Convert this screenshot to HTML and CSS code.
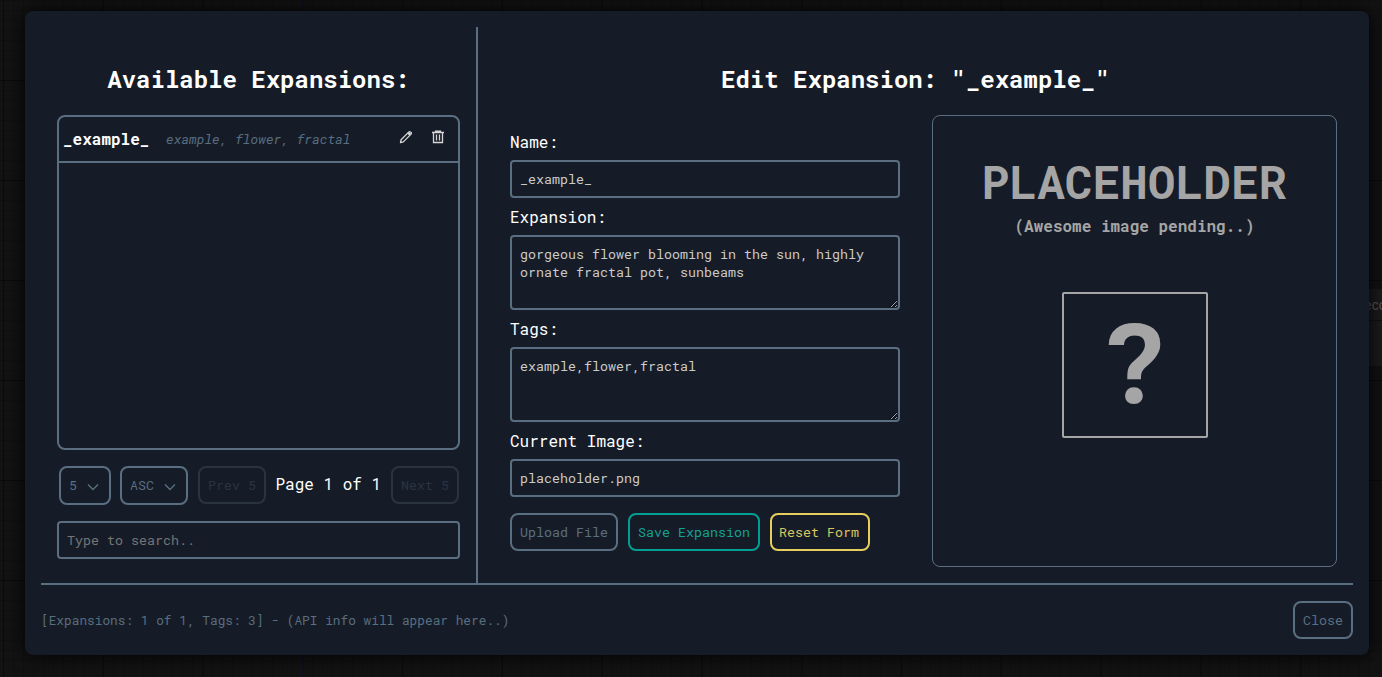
FILE: index.html
```html
<!DOCTYPE html>
<html lang="en">
<head>
<meta charset="utf-8">
<title>Expansions</title>
<link rel="stylesheet" href="styles.css">
</head>
<body>
<div class="canvas">
  <div class="link-v"></div>
  <div class="link-h"></div>
  <div class="node"><div class="node-title">eco</div></div>
</div>
<div class="modal">
  <div class="columns">
    <section class="browse">
      <h2>Available Expansions:</h2>
      <div class="list">
        <div class="item">
          <strong class="item-name">_example_</strong>
          <em class="item-tags">example, flower, fractal</em>
          <svg class="icon edit" viewBox="0 0 16 16" fill="none" stroke="#d6d6d6" stroke-width="1.3" stroke-linejoin="round"><path d="M2.500 13.500 3.100 10.700 10.900 2.900a1 1 0 0 1 1.500 0l.7.7a1 1 0 0 1 0 1.500L5.300 12.900Z"/><path d="m10.300 3.900 1.800 1.800" stroke-width="2.600"/></svg>
          <svg class="icon trash" viewBox="0 0 16 16" fill="none" stroke="#d6d6d6" stroke-width="1.3"><path d="M2 3.500h12M5.500 3V2.200h5V3M3.500 3.500v10h9v-10M6.500 5.500v6M9.500 5.500v6"/></svg>
        </div>
      </div>
      <div class="pager">
        <button class="btn select">5<svg class="chevron" viewBox="0 0 12 8"><path d="m1 1.500 5 5 5-5"/></svg></button>
        <button class="btn select order">ASC<svg class="chevron" viewBox="0 0 12 8"><path d="m1 1.500 5 5 5-5"/></svg></button>
        <button class="btn prev" disabled>Prev 5</button>
        <span class="page">Page 1 of 1</span>
        <button class="btn next" disabled>Next 5</button>
      </div>
      <input class="field search" placeholder="Type to search..">
    </section>
    <section class="editor">
      <h2>Edit Expansion: "_example_"</h2>
      <div class="editor-body">
        <form class="form">
          <label for="name">Name:</label>
          <input class="field" id="name" value="_example_">
          <label for="text">Expansion:</label>
          <textarea class="field area" id="text" spellcheck="false">gorgeous flower blooming in the sun, highly ornate fractal pot, sunbeams</textarea>
          <label for="tags">Tags:</label>
          <textarea class="field area" id="tags" spellcheck="false">example,flower,fractal</textarea>
          <label for="image">Current Image:</label>
          <input class="field" id="image" value="placeholder.png">
          <div class="actions">
            <button type="button" class="btn upload">Upload File</button>
            <button type="button" class="btn save">Save Expansion</button>
            <button type="button" class="btn reset">Reset Form</button>
          </div>
        </form>
        <div class="preview">
          <div class="preview-title">PLACEHOLDER</div>
          <div class="preview-note">(Awesome image pending..)</div>
          <div class="preview-box"><span class="mark">?</span></div>
        </div>
      </div>
    </section>
  </div>
  <footer class="footer">
    <span class="status">[Expansions: 1 of 1, Tags: 3] - (API info will appear here..)</span>
    <button class="btn">Close</button>
  </footer>
</div>
</body>
</html>
```
FILE: styles.css
```css
* { box-sizing: border-box; }
body {
  margin: 0;
  height: 677px;
  overflow: hidden;
  padding: 11px 13px 22px 25px;
  background: #111;
  color: #fff;
  font-family: "Roboto Mono", "DejaVu Sans Mono", "Liberation Mono", monospace;
  font-size: 16px;
}
.canvas {
  position: absolute;
  inset: 0;
  overflow: hidden;
  background:
    linear-gradient(90deg, #0b0b0b 1px, transparent 1px) 3px 0 / 99.8px 100px,
    linear-gradient(#0b0b0b 1px, transparent 1px) 0 80px / 100px 100px,
    linear-gradient(90deg, #101010 1px, transparent 1px) 3px 0 / 9.98px 10px,
    linear-gradient(#101010 1px, transparent 1px) 0 0 / 10px 10px,
    #131313;
}
.link-v { position: absolute; left: 302px; top: 0; width: 1px; height: 677px; background: #101320; }
.link-h { position: absolute; left: 1300px; top: 80px; width: 82px; height: 1px; background: #101320; }
.node { position: absolute; left: 1300px; top: 289px; width: 120px; height: 77px; background: #1c1c1c; }
.node-title {
  height: 32px;
  padding: 6px 0 0 64px;
  border-bottom: 1px solid #111;
  color: #5a5a5a;
  font: 14px/20px "Liberation Sans", sans-serif;
}
.modal {
  position: relative;
  height: 644px;
  padding: 16px;
  border-radius: 8px;
  background: #161c27;
  box-shadow: 0 0 20px #000;
}
.columns { display: flex; height: 556px; }
.browse { width: 437px; padding: 0 16px; border-right: 2px solid #596e80; }
.editor { flex: 1; }
h2 {
  margin: 0;
  height: 88px;
  padding-top: 36px;
  font-size: 24px;
  line-height: 32px;
  text-align: center;
}
.list { height: 335px; border: 2px solid #596e80; border-radius: 8px; }
.item {
  display: flex;
  align-items: center;
  height: 46px;
  padding: 0 12px 0 4px;
  border-bottom: 2px solid #596e80;
}
.item-name { width: 103px; line-height: 22px; }
.item-tags { flex: 1; color: #596e80; font-size: 13.1px; }
.icon { width: 16px; height: 16px; margin-bottom: 4px; }
.trash { margin-left: 16px; width: 16px; }
.pager { display: flex; align-items: flex-start; height: 55px; margin-top: 16px; padding-left: 2px; }
.btn {
  height: 38px;
  padding: 0 8px;
  border: 2px solid #596e80;
  border-radius: 8px;
  background: transparent;
  color: #596e80;
  font-family: inherit;
  font-size: 13.333px;
  white-space: nowrap;
}
.btn:disabled { border-color: #2a3441; color: #2a3441; }
.select { display: flex; align-items: center; justify-content: space-between; width: 52px; height: 39px; padding-right: 10px; padding-bottom: 1px; }
.order { width: 68px; margin-left: 9px; }
.chevron { width: 12px; height: 8px; margin-top: 4px; fill: none; stroke: #596e80; stroke-width: 1.4; }
.prev { width: 68px; margin-left: 10px; }
.next { width: 68px; margin-left: auto; margin-right: 1px; }
.page { margin-left: 9.500px; line-height: 35px; white-space: nowrap; }
.field {
  display: block;
  width: 100%;
  height: 38px;
  padding: 8px;
  border: 2px solid #596e80;
  border-radius: 4px;
  background: transparent;
  color: #cacaca;
  font-family: inherit;
  font-size: 13.333px;
  line-height: 18px;
}
.field::placeholder { color: #757575; }
.area { height: 75px; resize: vertical; }
.editor-body { display: flex; gap: 32px; padding: 0 16px 0 32px; }
.form { width: 390px; padding-top: 16px; }
label { display: block; height: 29px; line-height: 21px; }
.field + label { height: 37px; padding-top: 8px; }
.actions { display: flex; gap: 10px; margin-top: 16px; }
.save { border-color: #009f94; color: #15a094; }
.reset { width: 100px; padding: 0 9px 0 7px; border-color: #e6cf5c; color: #d8c65f; }
.preview {
  display: flex;
  flex-direction: column;
  align-items: center;
  width: 405px;
  height: 452px;
  padding-top: 35px;
  border: 1px solid #596e80;
  border-radius: 8px;
  color: #a5a5a5;
  font-weight: bold;
}
.preview-title { margin-right: 1px; font-size: 46.200px; line-height: 62px; }
.preview-note { height: 79px; line-height: 25px; }
.preview-box {
  width: 146px;
  height: 146px;
  border: 2px solid #a5a5a5;
  border-radius: 2px;
  font-size: 112px;
  line-height: 131px;
  text-align: center;
}
.mark { margin-right: 2px; }
.footer {
  display: flex;
  align-items: flex-start;
  justify-content: space-between;
  padding-top: 16px;
  border-top: 2px solid #596e80;
}
.status { color: #596e80; font-size: 12.8px; line-height: 38px; }
```
